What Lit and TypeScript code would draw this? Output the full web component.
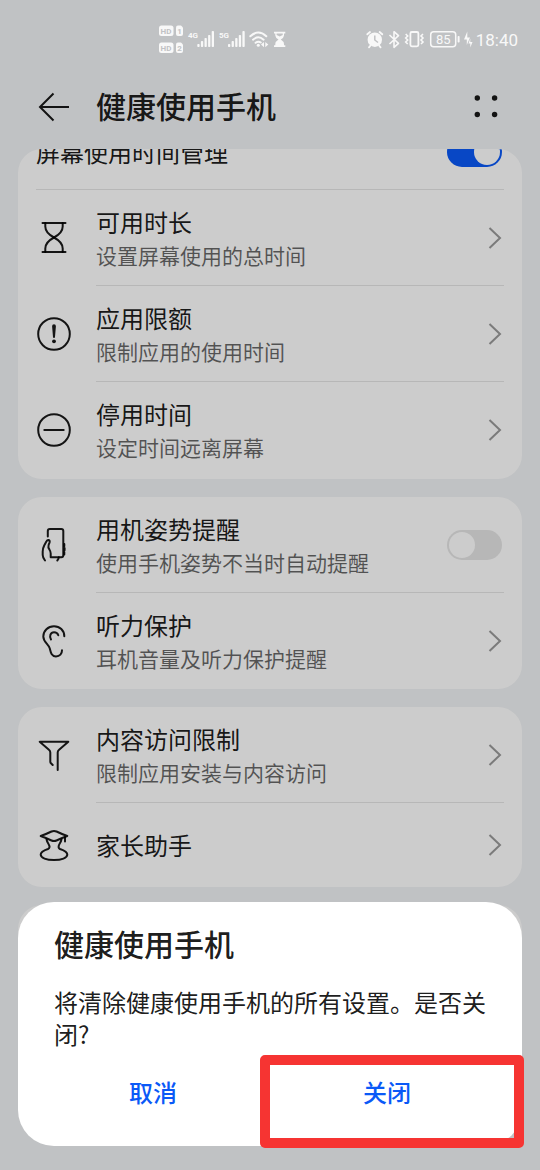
import { LitElement, html, css, svg, nothing } from "lit";
import { customElement, property, state } from "lit/decorators.js";

type IconName = "hourglass" | "alert" | "minus" | "posture" | "ear" | "funnel" | "guardian";

interface Item {
  title: string;
  detail?: string;
  icon?: IconName;
  toggle?: boolean;
  on?: boolean;
}

const icons = {
  hourglass: svg`
    <path d="M6.500 3H29.500M6.500 32H29.500"/>
    <path d="M9.300 3V6.500C9.300 11.500 13 14.800 18 17.500C23 20.200 26.700 23.500 26.700 28.500V32"/>
    <path d="M26.700 3V6.500C26.700 11.500 23 14.800 18 17.500C13 20.200 9.300 23.500 9.300 28.500V32"/>`,
  alert: svg`
    <circle cx="18" cy="18" r="15.800"/>
    <path class="solid" d="M16.100 10.200a1.900 1.900 0 0 1 3.800 0L19 21a1 1 0 0 1-2 0Z"/>
    <circle class="solid" cx="18" cy="25.300" r="1.900"/>`,
  minus: svg`<circle cx="18" cy="18" r="15.800"/><path d="M8.300 18H27.700"/>`,
  posture: svg`
    <path d="M11.800 9.500V4Q11.800 2 13.800 2H25.300Q27.300 2 27.300 4V28.300Q27.300 30.300 25.300 30.300H14.700V26.500Q14.700 24.500 13.500 22.700Q11.800 20.500 12.600 18L13.600 15.300Q14 13.500 12.600 13Q11.300 12.700 10.500 14.300L8.200 18.500Q6.700 21.500 6.700 24.500V28Q6.700 30.500 9 33.500"/>
    <path d="M22.800 30.300Q22.700 32 21.300 33.500"/>
    <path d="M28.300 17V19.300M28.600 21V23.300M28.300 25V27.500"/>`,
  ear: svg`
    <path d="M28.300 13.300C28.300 7.500 23.800 3.200 18 3.200C12 3.200 7.300 7.800 7.300 13.500C7.300 19 12.500 21 13.800 25.500C14.800 29.500 15.500 33.400 20 33.400C23.800 33.400 26 30.800 26 27.300"/>
    <path d="M15 16.500C13 13 14.500 9.300 18 9.300C20.300 9.300 21.700 10.500 22.300 12.300"/>`,
  funnel: svg`
    <path d="M16.700 28L15 26.300Q14.300 25.700 14.300 24.700V15.500Q14.300 14 13.200 13.100L3.700 4.800H32.300L22.800 13.100Q21.700 14 21.700 15.500V33"/>`,
  guardian: svg`
    <path d="M4.700 9Q11.500 6.500 15.500 4.500Q18 3.300 20.500 4.500Q24.500 6.500 31.300 9Q24.500 11.500 20.500 13.500Q18 14.700 15.500 13.500Q11.500 11.500 4.700 9Z"/>
    <path d="M29 10V14.500"/>
    <path d="M10.500 12.300Q11 15 12.500 17Q14.800 20.800 12 22C7.500 23.500 4.700 24.800 4.700 27.500C4.700 31 10.500 33 18 33C25.500 33 31.300 31 31.300 27.500C31.300 24.800 28.500 23.500 24 22C21.200 20.800 23.500 17 23.500 17Q25 15 25.500 12.300"/>`,
};

@customElement("status-bar")
class StatusBar extends LitElement {
  static styles = css`
    :host {
      display: flex;
      align-items: center;
      justify-content: space-between;
      height: 52px;
      padding: 13px 22px 0 159px;
      color: #f8f8f8;
      font-family: Roboto, "Noto Sans CJK SC", sans-serif;
    }
    svg { display: block; fill: currentColor; }
    .line { fill: none; stroke: currentColor; }
    .cut { fill: #c1c2c4; font-weight: 700; font-size: 8px; }
    .net { font-size: 8px; font-weight: 700; }
    .level { font-size: 13px; }
    .right { display: flex; align-items: center; gap: 2px; }
    .time { font-size: 17px; line-height: 24px; padding-top: 2px; }
  `;

  private bars(x: number) {
    return [44, 41, 38, 35, 31].map(
      (top, i) => svg`<rect x=${x + i * 3.6} y=${top} width="2.300" height=${47 - top} rx="0.800"/>`
    );
  }

  render() {
    return html`
      <svg width="128" height="32" viewBox="159 23 128 32" aria-hidden="true">
        <rect x="159" y="25.500" width="14.500" height="10.500" rx="2.500"/>
        <path d="M178 25.500h3l2 2v6.500a2 2 0 0 1-2 2h-3a2 2 0 0 1-2-2v-6.500a2 2 0 0 1 2-2Z"/>
        <rect x="159" y="42.500" width="14.500" height="10.500" rx="2.500"/>
        <path d="M178 42.500h3l2 2v6.500a2 2 0 0 1-2 2h-3a2 2 0 0 1-2-2v-6.500a2 2 0 0 1 2-2Z"/>
        <text class="cut" x="160.600" y="33.600">HD</text>
        <text class="cut" x="177.300" y="33.600">1</text>
        <text class="cut" x="160.600" y="50.600">HD</text>
        <text class="cut" x="177.300" y="50.600">2</text>
        <text class="net" x="188" y="38">4G</text>
        ${this.bars(197.3)}
        <text class="net" x="219" y="38">5G</text>
        ${this.bars(228)}
        <g class="line" stroke-width="2" stroke-linecap="round">
          <path d="M250.300 36.200Q258.300 28.800 266.300 36.200"/>
          <path d="M253 39.700Q258.300 34.900 263.600 39.700"/>
          <path d="M255.600 42.800Q258.300 40.800 260.800 42.500"/>
        </g>
        <circle cx="258.300" cy="45.300" r="1.500"/>
        <path d="M264 42V47.300L261 44.600ZM265.300 42V47.300L268.300 44.600Z"/>
        <path d="M274 31.800H285.300V33.500H284V35.500Q284 37.500 280.800 39.500Q284 41.500 284 44V45.300H285.300V47H274V45.300H275.300V44Q275.300 41.500 278.500 39.500Q275.300 37.500 275.300 35.500V33.500H274Z"/>
        <path class="cut" d="M276.600 33.500H282.700V35L279.700 36.500L276.600 35Z"/>
      </svg>
      <div class="right">
        <svg width="108" height="32" viewBox="366 23 108 32" aria-hidden="true">
          <circle cx="374.800" cy="39.700" r="7.200"/>
          <path class="line" stroke-width="1.800" stroke-linecap="round" d="M367.300 34.300L370 32M382.300 34.300L379.600 32M370.500 45.500L369 47.300M379.100 45.500L380.600 47.300"/>
          <path fill="none" stroke="#c1c2c4" stroke-width="1.500" d="M374.800 35.500V40L378 42.500"/>
          <path class="line" stroke-width="1.600" stroke-linejoin="round" d="M389.500 35L398.500 43.300L394 47.300V31.700L398.500 35.700L389.500 44"/>
          <rect class="line" stroke-width="1.800" x="410.400" y="32" width="8" height="14.300" rx="1.500"/>
          <path class="line" stroke-width="1.600" d="M405.700 34L407.700 36L405.700 38L407.700 40L405.700 42L407.700 44M423 34L421 36L423 38L421 40L423 42L421 44"/>
          <rect class="line" stroke-width="1.500" x="430.700" y="31.700" width="25" height="15" rx="3"/>
          <rect x="457.600" y="36" width="2" height="6.500" rx="0.800"/>
          <text class="level" x="443.200" y="44" text-anchor="middle">85</text>
          <path d="M467.300 31.500L464 39.500H466.800V45L470 37.500H467.300ZM470.300 38.500L468.500 43.500H470.300V47.500L472.500 42H470.300Z"/>
        </svg>
        <span class="time">18:40</span>
      </div>`;
  }
}

@customElement("setting-row")
class SettingRow extends LitElement {
  @property({ attribute: false }) item!: Item;

  static styles = css`
    :host { display: block; }
    .row {
      box-sizing: border-box;
      display: flex;
      align-items: stretch;
      gap: 24px;
      width: 100%;
      min-height: 84px;
      margin: 0;
      padding: 0 18px;
      border: 0;
      background: none;
      color: rgba(0, 0, 0, 0.9);
      font: inherit;
      text-align: left;
    }
    .double { min-height: 96px; }
    .double .text { padding-bottom: 2px; }
    .heading { min-height: 75px; }
    .icon { flex: none; align-self: center; width: 36px; height: 36px; }
    .icon svg {
      display: block;
      fill: none;
      stroke: currentColor;
      stroke-width: 2;
      stroke-linecap: round;
      stroke-linejoin: round;
    }
    .icon .solid { fill: currentColor; stroke: none; }
    .body {
      flex: 1;
      display: flex;
      align-items: center;
      justify-content: space-between;
      padding-right: 2px;
      border-bottom: 1px solid transparent;
    }
    :host([divided]) .body { border-bottom-color: #e5e5e5; }
    .text { display: flex; flex-direction: column; }
    .title { font-size: 24px; line-height: 36px; }
    .detail { font-size: 21px; line-height: 30px; color: rgba(0, 0, 0, 0.6); }
    .chevron { flex: none; fill: none; stroke: #9a9a9a; stroke-width: 2; }
    .switch {
      appearance: none;
      flex: none;
      box-sizing: border-box;
      width: 55px;
      height: 30px;
      margin: 0;
      padding: 2px;
      border-radius: 15px;
      background: #e5e5e5;
      display: flex;
    }
    .switch::before {
      content: "";
      width: 26px;
      height: 26px;
      border-radius: 50%;
      background: #fff;
    }
    .switch:checked { background: #0a59f7; justify-content: flex-end; }
  `;

  render() {
    const { title, detail, icon, toggle, on } = this.item;
    const lead = icon
      ? html`<span class="icon"><svg width="36" height="36" viewBox="0 0 36 36" aria-hidden="true">${icons[icon]}</svg></span>`
      : nothing;
    const text = html`<span class="text">
      <span class="title">${title}</span>
      ${detail ? html`<span class="detail">${detail}</span>` : nothing}
    </span>`;
    const size = detail ? "double" : icon ? "" : "heading";
    if (toggle) {
      return html`<label class="row ${size}">${lead}
        <span class="body">${text}<input class="switch" type="checkbox" role="switch" .checked=${!!on} /></span>
      </label>`;
    }
    return html`<button class="row ${size}" type="button">${lead}
      <span class="body">${text}
        <svg class="chevron" width="14" height="24" viewBox="0 0 14 24" aria-hidden="true"><path d="M1.500 2L12 12L1.500 22"/></svg>
      </span>
    </button>`;
  }
}

@customElement("app-root")
class AppRoot extends LitElement {
  @state() private groups: Item[][] = [
    [
      { title: "屏幕使用时间管理", toggle: true, on: true },
      { title: "可用时长", detail: "设置屏幕使用的总时间", icon: "hourglass" },
      { title: "应用限额", detail: "限制应用的使用时间", icon: "alert" },
      { title: "停用时间", detail: "设定时间远离屏幕", icon: "minus" },
    ],
    [
      { title: "用机姿势提醒", detail: "使用手机姿势不当时自动提醒", icon: "posture", toggle: true },
      { title: "听力保护", detail: "耳机音量及听力保护提醒", icon: "ear" },
    ],
    [
      { title: "内容访问限制", detail: "限制应用安装与内容访问", icon: "funnel" },
      { title: "家长助手", icon: "guardian" },
    ],
    [],
  ];

  static styles = css`
    :host {
      display: flex;
      flex-direction: column;
      position: relative;
      height: 100vh;
      overflow: hidden;
      background: #f1f3f5;
      color: rgba(0, 0, 0, 0.9);
      font-family: "Noto Sans CJK SC", sans-serif;
    }
    status-bar { position: relative; z-index: 2; flex: none; }
    .header {
      flex: none;
      display: flex;
      align-items: center;
      gap: 24px;
      height: 84px;
      padding: 0 36px;
    }
    .header h1 { flex: 1; margin: 0; padding-bottom: 4px; font-size: 30px; line-height: 40px; font-weight: 500; }
    .tool { padding: 0; border: 0; background: none; color: inherit; }
    .tool svg { display: block; }
    .list {
      flex: 1;
      min-height: 0;
      display: flex;
      flex-direction: column;
      gap: 18px;
      margin: 0 18px;
      border-radius: 24px 24px 0 0;
      overflow: hidden;
    }
    .card { flex: none; border-radius: 24px; background: #fff; }
    .card:first-child { margin-top: -34px; padding-bottom: 1px; }
    .card:last-child { height: 180px; }
    .scrim {
      position: absolute;
      inset: 0;
      z-index: 1;
      display: flex;
      align-items: flex-end;
      padding: 0 18px 24px;
      background: rgba(0, 0, 0, 0.2);
    }
    .dialog {
      flex: 1;
      padding: 21px 0 23px;
      border-radius: 36px;
      background: #fff;
    }
    .dialog h2 { margin: 0 36px 23px; font-size: 30px; line-height: 40px; font-weight: 500; }
    .dialog p { margin: 0 36px 13px; font-size: 24px; line-height: 32px; }
    .actions { display: flex; padding: 0 18px; }
    .action {
      flex: 1;
      position: relative;
      height: 60px;
      padding: 0 0 3px;
      border: 0;
      background: none;
      color: #0a59f7;
      font: inherit;
      font-size: 24px;
      font-weight: 500;
    }
    .marked::after {
      content: "";
      position: absolute;
      inset: -8px -20px -25px -10px;
      border: 10px solid #f63432;
      border-radius: 5px;
    }
  `;

  render() {
    return html`
      <status-bar></status-bar>
      <header class="header">
        <button class="tool" type="button" aria-label="返回">
          <svg width="36" height="36" viewBox="0 0 36 36" fill="none" stroke="currentColor" stroke-width="2"><path d="M17.500 4.500L4 18L17.500 31.500M4 18H33"/></svg>
        </button>
        <h1>健康使用手机</h1>
        <button class="tool" type="button" aria-label="更多">
          <svg width="36" height="36" viewBox="0 0 36 36" fill="currentColor"><circle cx="9.300" cy="9" r="2.700"/><circle cx="26.600" cy="9" r="2.700"/><circle cx="9.300" cy="25.500" r="2.700"/><circle cx="26.600" cy="25.500" r="2.700"/></svg>
        </button>
      </header>
      <main class="list">
        ${this.groups.map(
          (group) => html`<section class="card">
            ${group.map((item, i) => html`<setting-row .item=${item} ?divided=${i < group.length - 1}></setting-row>`)}
          </section>`
        )}
      </main>
      <div class="scrim">
        <section class="dialog" role="dialog" aria-modal="true" aria-labelledby="dialog-title">
          <h2 id="dialog-title">健康使用手机</h2>
          <p>将清除健康使用手机的所有设置。是否关闭?</p>
          <div class="actions">
            <button class="action" type="button">取消</button>
            <button class="action marked" type="button">关闭</button>
          </div>
        </section>
      </div>`;
  }
}
